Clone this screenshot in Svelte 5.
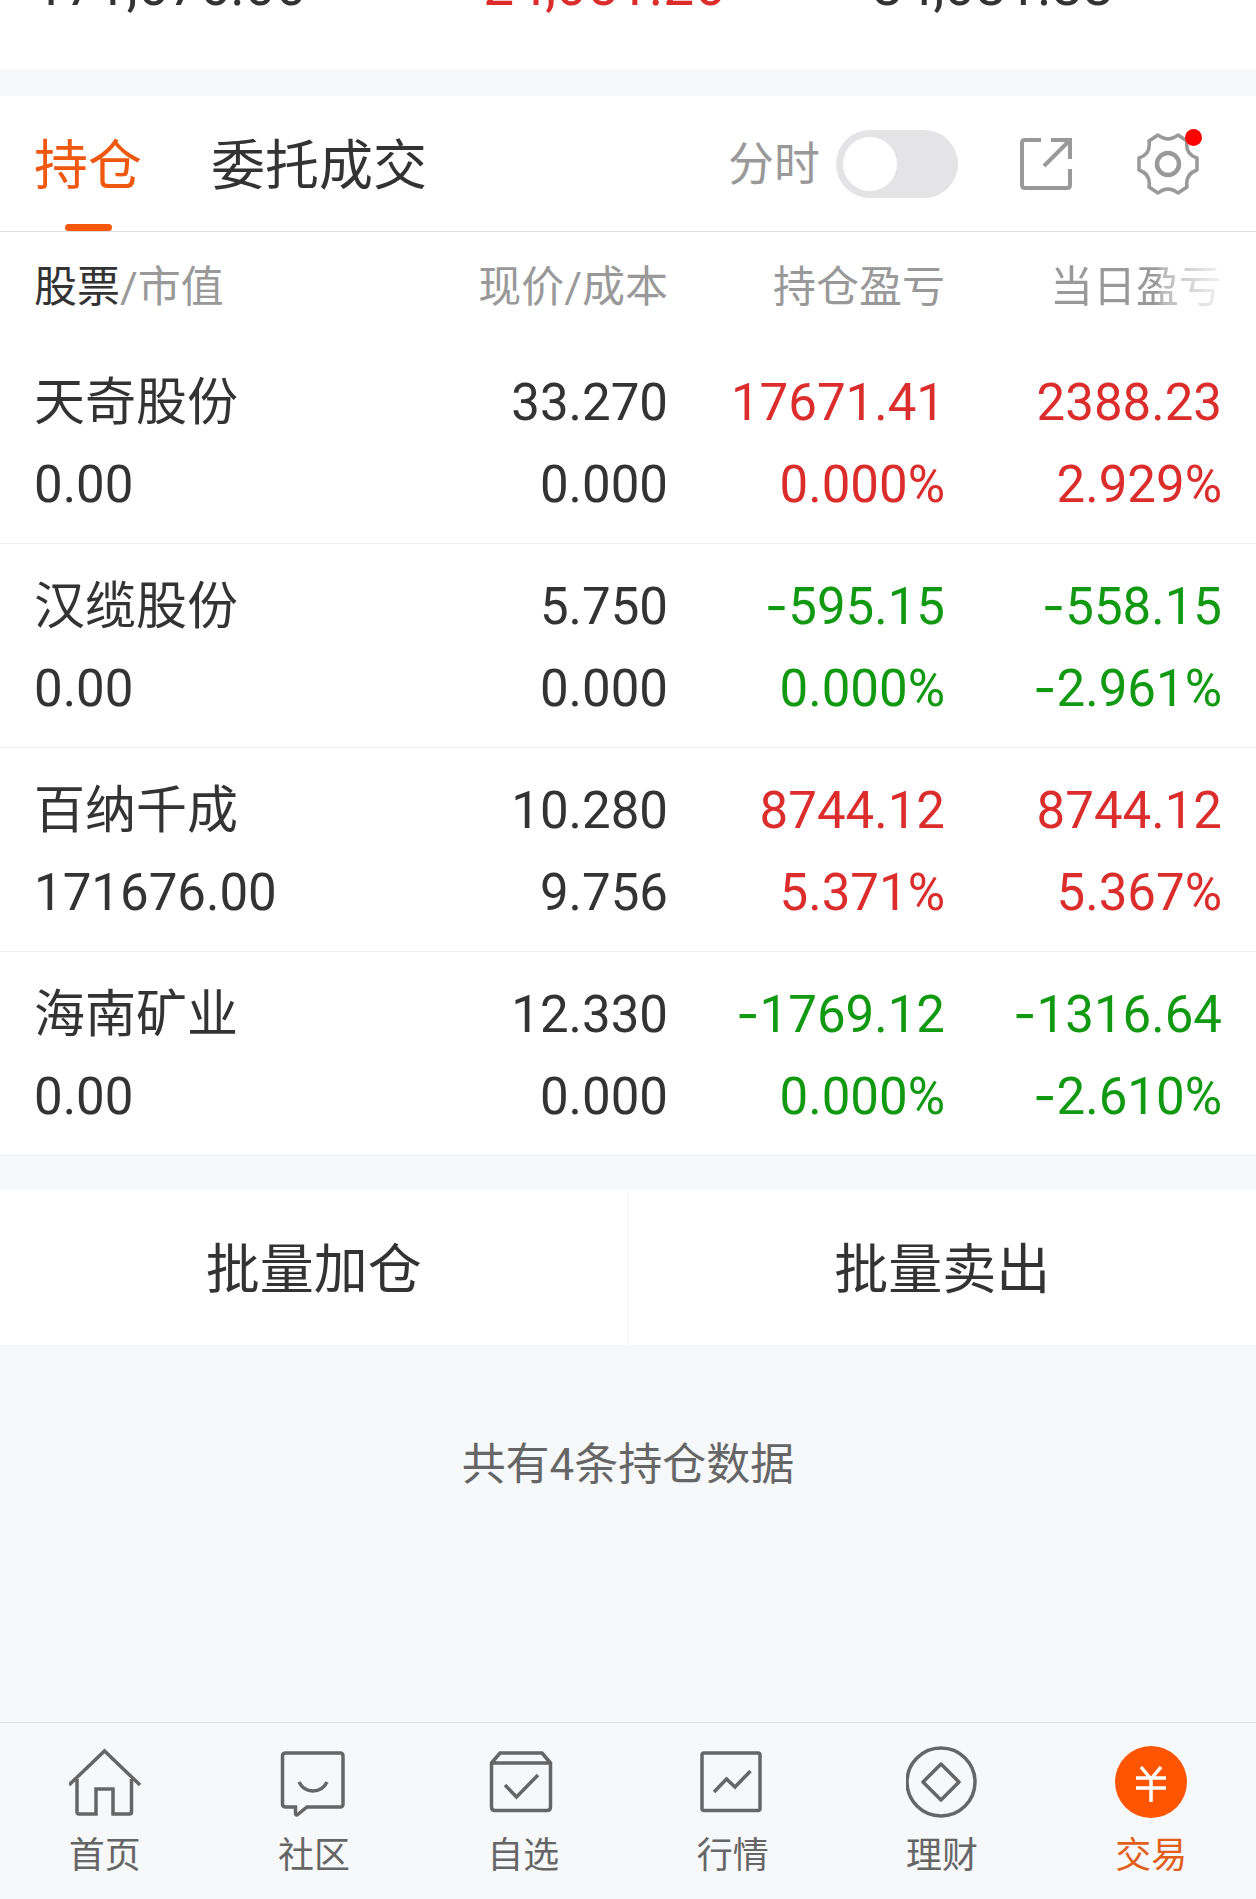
<script>
  let intraday = false;
  let activeTab = 'positions';
  let activeNav = 'trade';

  const summary = [
    { value: '171,676.00' },
    { value: '24,051.26', up: true },
    { value: '84,081.88' },
  ];

  const tabs = [
    { id: 'positions', label: '持仓' },
    { id: 'orders', label: '委托成交' },
  ];

  const positions = [
    { name: '天奇股份', value: '0.00', price: '33.270', cost: '0.000', profit: '17671.41', profitRate: '0.000%', day: '2388.23', dayRate: '2.929%' },
    { name: '汉缆股份', value: '0.00', price: '5.750', cost: '0.000', profit: '-595.15', profitRate: '0.000%', day: '-558.15', dayRate: '-2.961%' },
    { name: '百纳千成', value: '171676.00', price: '10.280', cost: '9.756', profit: '8744.12', profitRate: '5.371%', day: '8744.12', dayRate: '5.367%' },
    { name: '海南矿业', value: '0.00', price: '12.330', cost: '0.000', profit: '-1769.12', profitRate: '0.000%', day: '-1316.64', dayRate: '-2.610%' },
  ];

  const nav = [
    { id: 'home', label: '首页' },
    { id: 'community', label: '社区' },
    { id: 'watchlist', label: '自选' },
    { id: 'market', label: '行情' },
    { id: 'wealth', label: '理财' },
    { id: 'trade', label: '交易' },
  ];

  function isDown(amount) {
    return amount.startsWith('-');
  }
</script>

{#snippet amount(text)}
  <span class="line">{#if isDown(text)}<span class="sign">-</span>{text.slice(1)}{:else}{text}{/if}</span>
{/snippet}

<div class="page">
  <section class="summary">
    {#each summary as item}
      <span class="summary-value" class:up={item.up}>{item.value}</span>
    {/each}
  </section>

  <section class="holdings">
    <header class="toolbar">
      <div class="tabs">
        {#each tabs as tab}
          <button class="tab" class:active={activeTab === tab.id} on:click={() => activeTab = tab.id}>{tab.label}</button>
        {/each}
      </div>

      <label class="switch">
        <span>分时</span>
        <input type="checkbox" role="switch" bind:checked={intraday}>
      </label>

      <button class="icon-button" aria-label="分享">
        <svg width="52" height="52" viewBox="0 0 52 52" fill="none" stroke="#999" stroke-width="4">
          <path d="M21 2H5Q2 2 2 5V47Q2 50 5 50H47Q50 50 50 47V31" />
          <path d="M31 2H50V21M49 3L24 28" />
        </svg>
      </button>

      <button class="icon-button settings" aria-label="设置">
        <svg width="62" height="62" viewBox="0 0 62 62" fill="none" stroke="#999" stroke-width="3.500" stroke-linejoin="round">
          <path d="M21 2Q31 10 41 2L50 8Q48 21 60 25V37Q48 41 50 54L41 60Q31 52 21 60L12 54Q14 41 2 37V25Q14 21 12 8Z" />
          <circle cx="31" cy="31" r="11" stroke-width="4.500" />
        </svg>
        <span class="badge"></span>
      </button>
    </header>

    <table>
      <colgroup>
        <col>
        <col class="col-number">
        <col class="col-number">
        <col class="col-last">
      </colgroup>
      <thead>
        <tr>
          <th><span class="sorted">股票</span>/市值</th>
          <th>现价/成本</th>
          <th>持仓盈亏</th>
          <th class="fading">当日盈亏</th>
        </tr>
      </thead>
      <tbody>
        {#each positions as item}
          <tr>
            <td>
              <span class="line">{item.name}</span>
              <span class="line">{item.value}</span>
            </td>
            <td>
              <span class="line">{item.price}</span>
              <span class="line">{item.cost}</span>
            </td>
            <td class={isDown(item.profit) ? 'down' : 'up'}>
              {@render amount(item.profit)}
              {@render amount(item.profitRate)}
            </td>
            <td class={isDown(item.day) ? 'down' : 'up'}>
              {@render amount(item.day)}
              {@render amount(item.dayRate)}
            </td>
          </tr>
        {/each}
      </tbody>
    </table>
  </section>

  <section class="batch">
    <button>批量加仓</button>
    <button>批量卖出</button>
  </section>

  <p class="count">共有{positions.length}条持仓数据</p>

  <nav class="bottom-nav">
    {#each nav as item}
      <a href="#{item.id}" class:current={activeNav === item.id} on:click={() => activeNav = item.id}>
        <svg width="72" height="72" viewBox="0 0 72 72" fill="none" stroke="currentColor" stroke-width="3.500" aria-hidden="true">
          {#if item.id === 'home'}
            <path d="M0 39L35.500 5L71 39" />
            <path d="M8 33V66Q8 68 10 68H27V43H44V68H60.500Q62.500 68 62.500 66V33" />
          {:else if item.id === 'community'}
            <path d="M8 7H62Q65 7 65 10V58Q65 61 62 61H29L19 69Q17.500 69 17.500 67V61H8Q4.500 61 4.500 58V10Q4.500 7 8 7Z" />
            <path d="M21 36C27 48 43 48 49 36" />
          {:else if item.id === 'watchlist'}
            <path d="M4.500 17L13 7H55L63.500 17V61Q63.500 64.500 60 64.500H8Q4.500 64.500 4.500 61ZM4.500 17H63.500" />
            <path d="M18 39L29.500 51L51 29" />
          {:else if item.id === 'market'}
            <rect x="5" y="7" width="58" height="57.500" rx="2" />
            <path d="M17 46L29.500 33L38 41L53.500 25" />
          {:else if item.id === 'wealth'}
            <circle cx="35" cy="36" r="34" />
            <path d="M35 18L53 36L35 54L17 36Z" stroke-linejoin="round" />
          {:else}
            <circle cx="36" cy="36" r="36" fill="#f50" stroke="none" />
            <path d="M26 21L36 33L46 21M36 33V56M21 32H51M21 42H51" stroke="#fff" />
          {/if}
        </svg>
        <span>{item.label}</span>
      </a>
    {/each}
  </nav>
</div>

<style>
  :global(body) {
    background: #f7f8fa;
  }

  .page {
    display: flex;
    flex-direction: column;
    min-height: 100vh;
    overflow: hidden;
    font-family: Roboto, "Noto Sans CJK SC", sans-serif;
    color: #333;
    background: #f7f8fa;
  }

  button {
    padding: 0;
    border: none;
    font: inherit;
    color: inherit;
    background: none;
    cursor: pointer;
  }

  svg {
    display: block;
  }

  .up {
    color: #dc2d2d;
  }

  .down {
    color: #129912;
  }

  /* the figures are scrolled half out of view above the holdings */
  .summary {
    display: grid;
    grid-template-columns: 449fr 388fr 384fr;
    margin-top: -44px;
    padding: 0 0 53px 34px;
    background: #fff;
  }

  .summary-value {
    font-size: 55px;
    line-height: 60px;
  }

  .holdings {
    margin-top: 27px;
    background: #fff;
  }

  .toolbar {
    display: flex;
    align-items: center;
    height: 135px;
    padding: 0 57px 0 34px;
    border-bottom: 1px solid #ddd;
  }

  .tabs {
    display: flex;
    align-self: stretch;
    gap: 69px;
    margin-right: auto;
  }

  .tab {
    position: relative;
    padding-bottom: 4px;
    font-size: 54px;
  }

  .tab.active {
    color: #f0570f;
  }

  .tab.active::after {
    content: '';
    position: absolute;
    left: 50%;
    bottom: 0;
    width: 47px;
    height: 7px;
    margin-left: -23px;
    border-radius: 4px;
    background: #f7580c;
  }

  .switch {
    display: flex;
    align-items: center;
    gap: 16px;
    font-size: 46px;
    line-height: 68px;
    color: #999;
  }

  .switch input {
    appearance: none;
    width: 122px;
    height: 68px;
    margin: 0;
    padding: 7px;
    box-sizing: border-box;
    border-radius: 34px;
    background: #e4e4e6;
    cursor: pointer;
  }

  .switch input::before {
    content: '';
    display: block;
    width: 54px;
    height: 54px;
    border-radius: 50%;
    background: #fff;
  }

  .switch input:checked {
    background: #f7580c;
  }

  .switch input:checked::before {
    margin-left: auto;
  }

  .icon-button {
    margin-left: 62px;
  }

  .settings {
    position: relative;
    margin-left: 65px;
  }

  .badge {
    position: absolute;
    top: -4px;
    right: -3px;
    width: 17px;
    height: 17px;
    border-radius: 50%;
    background: #f00;
  }

  table {
    width: 100%;
    table-layout: fixed;
    border-collapse: separate;
    border-spacing: 0;
  }

  .col-number {
    width: 277px;
  }

  .col-last {
    width: 311px;
  }

  th {
    padding: 25px 0 23px;
    font-size: 43px;
    font-weight: normal;
    line-height: 60px;
    text-align: right;
    color: #999;
  }

  .sorted {
    color: #333;
  }

  .fading {
    background: linear-gradient(to right, #999 68%, #b8b8b8 70%, #f4f4f4 89%);
    background-clip: text;
    color: transparent;
  }

  td {
    padding: 22px 0 17px;
    border-bottom: 1px solid #ececec;
    font-size: 51px;
    text-align: right;
  }

  th:first-child, td:first-child {
    padding-left: 34px;
    text-align: left;
  }

  th:last-child, td:last-child {
    padding-right: 34px;
  }

  .line {
    display: block;
    line-height: 82px;
  }

  .sign {
    font-family: Inter, sans-serif;
    line-height: 1;
  }

  .batch {
    display: flex;
    margin-top: 34px;
    background: #fff;
  }

  .batch button {
    flex: 1;
    height: 155px;
    padding-bottom: 4px;
    font-size: 54px;
  }

  .batch button:first-child {
    border-right: 1px solid #f4f5f7;
  }

  .count {
    margin: 90px 0;
    font-size: 44px;
    line-height: 60px;
    text-align: center;
    color: #666;
  }

  .bottom-nav {
    display: flex;
    margin-top: auto;
    padding: 23px 0;
    border-top: 1px solid #dedfe1;
  }

  .bottom-nav a {
    display: flex;
    flex: 1;
    flex-direction: column;
    align-items: center;
    gap: 18px;
    font-size: 36px;
    line-height: 40px;
    text-decoration: none;
    color: #666;
  }

  .bottom-nav .current {
    color: #e0601a;
  }
</style>
